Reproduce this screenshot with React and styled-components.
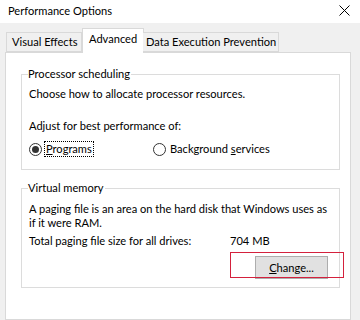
import React from "react";
import styled, { createGlobalStyle } from "styled-components";

const Global = createGlobalStyle`
  html, body { margin: 0; padding: 0; background: #f0f0f0; }
  body { font-family: "Segoe UI", Lato, "Liberation Sans", sans-serif; font-size: 11.1px; color: #000; }
`;

const Window = styled.div`
  width: 360px;
  height: 320px;
  overflow: hidden;
  background: #f0f0f0;
  display: flex;
  flex-direction: column;
`;

const TitleBar = styled.div`
  height: 23px;
  flex: none;
  background: #fff;
  display: flex;
  align-items: center;
  justify-content: space-between;
  padding: 0 10px 2px 8px;
  box-sizing: border-box;
`;

const Title = styled.span`
  line-height: 14px;
`;

const TabStrip = styled.div`
  display: flex;
  align-items: flex-end;
  padding: 5px 0 0 6px;
  height: 24px;
  position: relative;
  z-index: 1;
`;

const Tab = styled.div`
  box-sizing: border-box;
  height: ${(p) => (p.$active ? "25px" : "20px")};
  width: ${(p) => p.$w}px;
  margin-right: ${(p) => (p.$active ? "-1px" : "0")};
  margin-bottom: ${(p) => (p.$active ? "-1px" : "0")};
  border: 1px solid #d9d9d9;
  border-bottom: ${(p) => (p.$active ? "none" : "1px solid #d9d9d9")};
  border-left: ${(p) => (p.$first || p.$active ? "1px solid #d9d9d9" : "none")};
  background: ${(p) => (p.$active ? "#fff" : "#f0f0f0")};
  padding-left: ${(p) => p.$pl}px;
  padding-top: ${(p) => (p.$active ? "3px" : "2px")};
  line-height: 14px;
  white-space: nowrap;
`;

const Panel = styled.div`
  margin-left: 5px;
  width: 346px;
  flex: 1;
  box-sizing: border-box;
  background: #fff;
  border: 1px solid #d9d9d9;
  padding: 0 10px 0 15px;
  display: flex;
  flex-direction: column;
`;

const Group = styled.fieldset`
  margin: ${(p) => p.$mt}px 0 0 0;
  padding: 0 0 0 7px;
  border: 1px solid #dcdcdc;
  height: ${(p) => p.$h}px;
  box-sizing: border-box;
  min-width: 0;
  position: relative;
  display: flex;
  flex-direction: column;
`;

const Legend = styled.legend`
  padding: 0 1px 0 0;
  margin-left: -1px;
  line-height: 14px;
`;

const Text = styled.div`
  line-height: 14px;
  margin-top: ${(p) => p.$mt || 0}px;
  max-width: 303px;
`;

const RadioRow = styled.div`
  display: flex;
  align-items: center;
  margin-top: ${(p) => p.$mt}px;
  height: 16px;
`;

const RadioOption = styled.label`
  display: flex;
  align-items: center;
  gap: 3px;
  width: ${(p) => p.$w}px;
`;

const RadioCircle = styled.span`
  width: 13px;
  height: 13px;
  box-sizing: border-box;
  border: 1px solid #333;
  border-radius: 50%;
  display: flex;
  align-items: center;
  justify-content: center;
  background: #fff;
  &::after {
    content: "";
    display: ${(p) => (p.$checked ? "block" : "none")};
    width: 7px;
    height: 7px;
    border-radius: 50%;
    background: #333;
  }
`;

const RadioLabel = styled.span`
  line-height: 14px;
  outline: ${(p) => (p.$focus ? "1px dotted #000" : "none")};
  padding: 0 1px;
`;

const U = styled.span`
  text-decoration: underline;
`;

const InfoRow = styled.div`
  display: grid;
  grid-template-columns: 201px auto;
  line-height: 14px;
  margin-top: 4px;
`;

const ButtonRow = styled.div`
  display: flex;
  justify-content: flex-end;
  padding-right: 11px;
  margin-top: 8px;
`;

const Button = styled.button`
  width: 73px;
  height: 23px;
  box-sizing: border-box;
  background: #e1e1e1;
  border: 1px solid #adadad;
  font: inherit;
  color: #000;
  padding: 0;
  line-height: 14px;
`;

const Highlight = styled.div`
  position: absolute;
  left: 208px;
  top: 57px;
  width: 114px;
  height: 26px;
  box-sizing: border-box;
  border: 1px solid #d4213d;
  pointer-events: none;
`;

export default function App() {
  return (
    <>
      <Global />
      <Window>
        <TitleBar>
          <Title>Performance Options</Title>
          <svg width="11" height="11" viewBox="0 0 11 11">
            <path d="M0.5 0.5 L10.5 10.5 M10.5 0.5 L0.5 10.5" stroke="#000" strokeWidth="1" />
          </svg>
        </TitleBar>
        <TabStrip>
          <Tab $first $w={76} $pl={5}>Visual Effects</Tab>
          <Tab $active $w={62} $pl={6}>Advanced</Tab>
          <Tab $w={136} $pl={3}>Data Execution Prevention</Tab>
        </TabStrip>
        <Panel>
          <Group $mt={14} $h={103}>
            <Legend>Processor scheduling</Legend>
            <Text $mt={6}>Choose how to allocate processor resources.</Text>
            <Text $mt={18}>Adjust for best performance of:</Text>
            <RadioRow $mt={8}>
              <RadioOption $w={124}>
                <RadioCircle $checked />
                <RadioLabel $focus><U>P</U>rograms</RadioLabel>
              </RadioOption>
              <RadioOption>
                <RadioCircle />
                <RadioLabel>Background <U>s</U>ervices</RadioLabel>
              </RadioOption>
            </RadioRow>
          </Group>
          <Group $mt={11} $h={107}>
            <Legend>Virtual memory</Legend>
            <Text $mt={7}>A paging file is an area on the hard disk that Windows uses as if it were RAM.</Text>
            <InfoRow>
              <span>Total paging file size for all drives:</span>
              <span>704 MB</span>
            </InfoRow>
            <ButtonRow>
              <Button><U>C</U>hange...</Button>
            </ButtonRow>
            <Highlight />
          </Group>
        </Panel>
      </Window>
    </>
  );
}
